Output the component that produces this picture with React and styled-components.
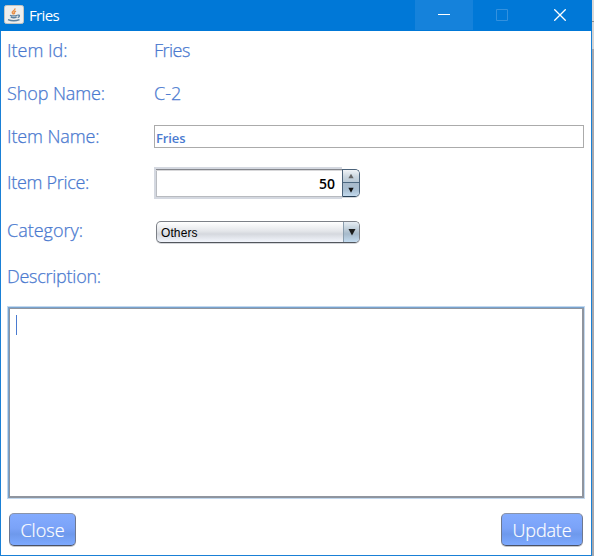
import React from "react";
import styled, { createGlobalStyle } from "styled-components";

const Global = createGlobalStyle`
  * { box-sizing: border-box; }
  body { margin: 0; background: #a9abaf; overflow: hidden; font-family: "Open Sans", sans-serif; }
`;

const Desktop = styled.div`
  width: 594px;
  height: 556px;
  background: linear-gradient(#d9d9d9 0 21px, #8c8c8c 21px 22px, #d4d4d4 22px 49px, #a5a8ae 49px);
`;

const Window = styled.main`
  width: 592px;
  height: 556px;
  display: flex;
  flex-direction: column;
  background: #fff;
  border: 1px solid #1a80d6;
  border-top: 0;
`;

const TitleBar = styled.header`
  height: 31px;
  flex: none;
  margin: 0 -1px;
  padding: 0 3px 0 4px;
  display: flex;
  align-items: flex-start;
  background: #0078d7;
  color: #fff;
`;

const JavaIcon = styled.svg`
  width: 20px;
  height: 19px;
  margin-top: 5px;
`;

const Title = styled.h1`
  margin: 0 auto 0 5px;
  font-size: 15px;
  font-weight: 400;
  line-height: 31px;
  letter-spacing: -0.65px;
`;

const Caption = styled.button`
  width: 58px;
  height: 30px;
  padding: 0;
  border: 0;
  display: grid;
  place-items: center;
  color: ${(p) => (p.$dim ? "#3391de" : "#fff")};
  background: ${(p) => (p.$lit ? "#1582db" : "transparent")};
`;

const Form = styled.div`
  display: grid;
  grid-template-columns: 147px 430px;
  grid-template-rows: 38px 48px 38px 54px 42px 50px;
  align-items: center;
  padding-left: 6px;
`;

const Text = styled.span`
  font-size: 18px;
  font-weight: 300;
  line-height: 24px;
  white-space: nowrap;
  color: #4a79cf;
  -webkit-text-stroke: 0.25px #4a79cf;
  letter-spacing: ${(p) => p.$track || 0}px;
`;

const NameInput = styled.div`
  height: 23px;
  border: 1px solid #ababab;
  padding-left: 1px;
  font-size: 13px;
  font-weight: 600;
  line-height: 24px;
  letter-spacing: -0.1px;
  color: #4a7bd0;
`;

const Spinner = styled.div`
  display: flex;
  align-items: center;
  height: 32px;
  margin-top: 2px;
`;

const SpinField = styled.div`
  width: 188px;
  height: 32px;
  border: 2px solid #d4d8e0;
  border-right: 0;
  box-shadow: inset 0 1px #85878d, inset 0 2px #d8d8da, inset 1px 0 #b9bcc1, inset 0 -1px #b8bbc0;
  padding-right: 7px;
  text-align: right;
  font-size: 14px;
  font-weight: 600;
  line-height: 30px;
  color: #000;
`;

const SpinButtons = styled.div`
  width: 18px;
  height: 28px;
  display: grid;
  grid-template-rows: 13px 1fr;
  border: 1px solid #4b6279;
  border-bottom-color: #273f55;
  border-radius: 0 5px 5px 0;
  overflow: hidden;
  box-shadow: 0 1px #d4d8dd;
`;

const SpinButton = styled.button`
  padding: 0;
  border: 0;
  display: grid;
  place-items: center;
  color: ${(p) => (p.$down ? "#111" : "#666")};
  background: ${(p) => (p.$down ? "linear-gradient(#a8bacb, #a9bfd2 55%, #c2d9ed)" : "linear-gradient(#f0f4f7, #cbd6df 55%, #b9c9d6)")};
  border-bottom: ${(p) => (p.$down ? "0" : "1px solid #4c6880")};
`;

const Combo = styled.div`
  width: 204px;
  height: 22px;
  margin: 4px 0 0 2px;
  display: flex;
  border: 1px solid #7c8087;
  border-bottom-color: #53575d;
  border-radius: 5px;
  overflow: hidden;
  background: linear-gradient(#fff, #e4e6ea 45%, #d5d8de 60%, #f3f6fd);
  box-shadow: 0 1px #d4d6da;
`;

const ComboValue = styled.span`
  flex: 1;
  padding-left: 4px;
  font: 12px/22px "Liberation Sans", sans-serif;
  letter-spacing: 0.1px;
  color: #000;
`;

const ComboArrow = styled.span`
  width: 16px;
  display: grid;
  place-items: center;
  color: #1c1c1c;
  border-left: 1px solid #8b9eae;
  background: linear-gradient(#e6edf3, #b0c1cf 50%, #a7bacb 60%, #c4dcf0);
`;

const Description = styled.div`
  width: 578px;
  height: 193px;
  margin: 5px 0 0 6px;
  border: 1px solid #c2d8ee;
  box-shadow: inset 1px 1px #78a3cf, inset 0 0 0 2px #8f959f;
  padding: 8px;
`;

const Caret = styled.div`
  width: 1px;
  height: 20px;
  background: #4a7bd0;
`;

const Actions = styled.footer`
  display: flex;
  justify-content: space-between;
  margin: 14px 8px 0;
`;

const ActionButton = styled.button`
  width: ${(p) => p.$width}px;
  height: 33px;
  padding: 0;
  border: 1px solid #6e7890;
  border-top-color: #8a94aa;
  border-bottom-color: #4a5266;
  border-radius: 5px;
  background: linear-gradient(#83abff, #7ba3f8 45%, #6e99ec 65%, #7da9ff);
  box-shadow: 0 1px #c6c8cc;
  font: 300 18px/32px "Open Sans", sans-serif;
  -webkit-text-stroke: 0.2px #fff;
  letter-spacing: ${(p) => p.$track}px;
  color: #fff;
`;

const Arrow = ({ up, size }) => (
  <svg width={size} height={size} viewBox="0 0 8 8">
    <path fill="currentColor" d={up ? "M4 1 7.5 7h-7z" : "M.5 1h7L4 7.5z"} />
  </svg>
);

export default function App() {
  return (
    <Desktop>
      <Global />
      <Window>
        <TitleBar>
          <JavaIcon viewBox="0 0 20 20" preserveAspectRatio="none" fill="none">
            <rect x=".5" y=".5" width="19" height="19" rx="2" fill="#eeeeed" stroke="#c9c5bf" />
            <path d="M10.800 3.500c1 2-2.800 2.700-2.500 4.500.1.9 1 1.300 1.300 2M12 6.500c-2 1-2.200 1.700-1.300 3.200" stroke="#e8914a" strokeWidth="1.500" />
            <path d="M6 10.800c2 .8 5 .8 7.300 0M6.800 12.800c2 .8 4 .8 5.800 0M4 15.300c3.500 1.500 8.500 1.300 11.500 0M13.500 10.700c2.500-.6 2.500 1.800.2 2.500" stroke="#5d819f" strokeWidth="1.400" />
          </JavaIcon>
          <Title>Fries</Title>
          <Caption $lit aria-label="Minimize">
            <svg width="12" height="12"><path d="M0 5.500h12" stroke="currentColor" /></svg>
          </Caption>
          <Caption $dim aria-label="Maximize">
            <svg width="12" height="12"><path d="M.5.500h11v11H.5z" fill="none" stroke="currentColor" /></svg>
          </Caption>
          <Caption aria-label="Close window">
            <svg width="12" height="12"><path d="m.3.300 11.400 11.400m0-11.400L.3 11.700" stroke="currentColor" strokeWidth="1.300" /></svg>
          </Caption>
        </TitleBar>
        <Form>
          <Text>Item Id:</Text>
          <Text $track={-0.5}>Fries</Text>
          <Text $track={-0.1}>Shop Name:</Text>
          <Text>C-2</Text>
          <Text $track={-0.12}>Item Name:</Text>
          <NameInput>Fries</NameInput>
          <Text $track={-0.3}>Item Price:</Text>
          <Spinner>
            <SpinField>50</SpinField>
            <SpinButtons>
              <SpinButton aria-label="Increase"><Arrow up size={6} /></SpinButton>
              <SpinButton $down aria-label="Decrease"><Arrow size={6} /></SpinButton>
            </SpinButtons>
          </Spinner>
          <Text>Category:</Text>
          <Combo>
            <ComboValue>Others</ComboValue>
            <ComboArrow><Arrow size={8} /></ComboArrow>
          </Combo>
          <Text $track={-0.25}>Description:</Text>
        </Form>
        <Description><Caret /></Description>
        <Actions>
          <ActionButton $width={67} $track={0}>Close</ActionButton>
          <ActionButton $width={82} $track={-0.15}>Update</ActionButton>
        </Actions>
      </Window>
    </Desktop>
  );
}
